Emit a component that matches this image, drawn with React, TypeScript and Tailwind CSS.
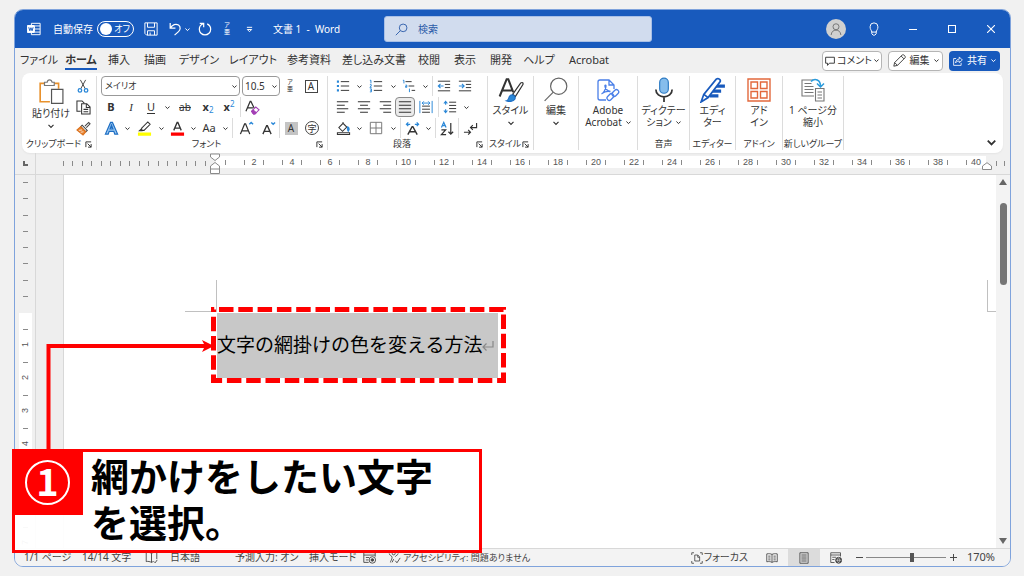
import type { ReactNode } from "react";
import clsx from "clsx";

const tabs = [
  { label: "ファイル", width: "w-11" },
  { label: "ホーム", width: "w-10", active: true },
  { label: "挿入", width: "w-9" },
  { label: "描画", width: "w-9" },
  { label: "デザイン", width: "w-[52px]" },
  { label: "レイアウト", width: "w-14" },
  { label: "参考資料", width: "w-14" },
  { label: "差し込み文書", width: "w-[74px]" },
  { label: "校閲", width: "w-9" },
  { label: "表示", width: "w-9" },
  { label: "開発", width: "w-9" },
  { label: "ヘルプ", width: "w-10" },
  { label: "Acrobat", width: "w-[60px]" },
];

const rulerNumbers = Array.from({ length: 19 }, (_, i) => (i + 1) * 2);

function Icon({ size = "h-4 w-4", box = 16, children }: { size?: string; box?: number; children: ReactNode }) {
  return (
    <svg
      viewBox={`0 0 ${box} ${box}`}
      className={clsx("shrink-0", size)}
      fill="none"
      stroke="currentColor"
      strokeWidth="1.1"
      aria-hidden="true"
    >
      {children}
    </svg>
  );
}

function Chevron({ className = "h-[5px] w-[5px]" }: { className?: string }) {
  return (
    <svg viewBox="0 0 6 6" className={clsx("shrink-0", className)} fill="none" stroke="currentColor" strokeWidth="1.2" aria-hidden="true">
      <path d="M.5 1.800 3 4.300l2.500-2.500" />
    </svg>
  );
}

function Tool({ label, width = "w-5", active, children }: { label: string; width?: string; active?: boolean; children: ReactNode }) {
  return (
    <button
      type="button"
      aria-label={label}
      className={clsx(
        "flex h-5 shrink-0 items-center justify-center",
        width,
        active && "rounded border border-[#8a8a8a] bg-[#ebebeb]"
      )}
    >
      {children}
    </button>
  );
}

function More({ label }: { label: string }) {
  return (
    <button type="button" aria-label={label} className="flex h-5 w-3 shrink-0 items-center justify-center">
      <Chevron />
    </button>
  );
}

function Divider() {
  return <span className="mx-px h-5 w-px shrink-0 bg-[#dcdcdc]" />;
}

function Group({ label, width, launcher, children }: { label?: string; width: string; launcher?: boolean; children: ReactNode }) {
  return (
    <section aria-label={label} className={clsx("flex shrink-0 flex-col py-[3px]", width)}>
      <div className="flex flex-1 flex-col border-r border-[#dcdcdc]">
        <div className="flex-1">{children}</div>
        <div className="flex h-3 items-center text-[9px] leading-3 whitespace-nowrap">
          <span className="flex flex-1 justify-center">{label}</span>
          {launcher && (
            <button type="button" aria-label={`${label}の設定`} className="mr-1">
              <Icon size="h-[7px] w-[7px]" box={8}>
                <path d="M1 7V1h6M3 3l4 4M7 3.500V7H3.500" />
              </Icon>
            </button>
          )}
        </div>
      </div>
    </section>
  );
}

function BigButton({ icon, lines, more }: { icon: ReactNode; lines: string[]; more?: "inline" | "below" }) {
  return (
    <button type="button" className="flex w-full flex-col items-center text-[10px] leading-3 whitespace-nowrap">
      <span className="flex h-7 items-center">{icon}</span>
      {lines.map((line, i) => (
        <span key={line} className="flex items-center gap-1">
          {line}
          {more === "inline" && i === lines.length - 1 && <Chevron />}
        </span>
      ))}
      {more === "below" && <Chevron className="mt-1 h-[6px] w-[6px]" />}
    </button>
  );
}

function TitleBar() {
  return (
    <header className="flex h-[38px] shrink-0 items-center bg-[#185abd] text-white">
      <div className="flex w-[369px] shrink-0 items-center pl-3 text-[10px]">
        <Icon size="h-[14px] w-[14px]">
          <path d="M5 4V1.500h10v13H5V12M9 4.500h6M9 8h6M9 11.500h6" />
          <path d="M.5 4h8v8h-8z" fill="#fff" />
          <path d="m2 6 1.200 4L4.500 6.500 5.800 10 7 6" stroke="#185abd" />
        </Icon>
        <label htmlFor="autosave" className="ml-3">自動保存</label>
        <span className="relative ml-1 flex">
          <input
            id="autosave"
            type="checkbox"
            role="switch"
            className="h-4 w-[37px] appearance-none rounded-full border border-white before:mt-px before:ml-[2px] before:block before:h-3 before:w-3 before:rounded-full before:bg-white"
          />
          <span className="pointer-events-none absolute inset-y-0 right-1 flex items-center text-[9px]">オフ</span>
        </span>
        <button type="button" aria-label="上書き保存" className="ml-[10px]">
          <Icon size="h-[14px] w-[14px]">
            <path d="M1 1h14v14H3L1 13zM4 1v5h8V1M4 15v-5h8v5M7 12v3" />
          </Icon>
        </button>
        <button type="button" aria-label="元に戻す" className="ml-[10px]">
          <Icon size="h-[14px] w-[14px]">
            <path d="M2.500 1v6h6M2.500 7C5 3 9 1.500 12 3.500c3 2.300 2 5.500 0 7.500l-4.500 4" strokeWidth="1.400" />
          </Icon>
        </button>
        <button type="button" aria-label="元に戻す履歴" className="ml-[3px]">
          <Chevron />
        </button>
        <button type="button" aria-label="やり直し" className="ml-2">
          <Icon size="h-[14px] w-[14px]">
            <path d="M2 1.500h4.500V6M6.300 1.700C3 3 1.500 5.500 1.500 8.300a6.500 6.500 0 0 0 13 0c0-3-1.600-5-4-6.200" strokeWidth="1.400" />
          </Icon>
        </button>
        <button type="button" aria-label="ルビ" className="ml-3 flex flex-col items-center text-[6px] leading-[7px]">
          <span>ア</span>
          <span>亜</span>
        </button>
        <button type="button" aria-label="クイック アクセスのカスタマイズ" className="ml-4">
          <Icon size="h-[7px] w-[7px]" box={8}>
            <path d="M1 1.500h6M1.500 4 4 6.500 6.500 4z" />
          </Icon>
        </button>
        <h1 className="ml-5 text-[10px] whitespace-pre">文書 1  -  Word</h1>
      </div>
      <label className="flex h-[26px] w-[268px] shrink items-center gap-[10px] rounded-[3px] border border-[#a9c0e6] bg-[#d1dcee] px-[10px] text-[#2a5aa8]">
        <Icon size="h-[13px] w-[13px]">
          <circle cx="10" cy="6" r="4.700" />
          <path d="M6.500 9.500 1 15" />
        </Icon>
        <input
          type="search"
          aria-label="検索"
          placeholder="検索"
          className="min-w-0 flex-1 bg-transparent text-[10px] outline-none placeholder:text-[#2a5aa8]"
        />
      </label>
      <div className="ml-auto flex items-center">
        <button type="button" aria-label="アカウント" className="flex w-9 justify-center">
          <span className="flex h-5 w-5 items-center justify-center rounded-full bg-[#d0d0d0] text-[#666]">
            <Icon size="h-3 w-3">
              <circle cx="8" cy="5" r="4" />
              <path d="M1.500 16c.5-4.500 3-6.500 6.500-6.500s6 2 6.500 6.500" />
            </Icon>
          </span>
        </button>
        <button type="button" aria-label="ヒント" className="flex w-[39px] justify-center">
          <Icon size="h-[14px] w-[14px]">
            <path d="M5.500 11.500C5.300 9.500 3.500 8.500 3.500 5.500a4.500 4.500 0 0 1 9 0c0 3-1.800 4-2 6zM5.500 11v2.500L7 15h2l1.500-1.500V11" />
          </Icon>
        </button>
        <button type="button" aria-label="最小化" className="flex w-[39px] justify-center">
          <Icon size="h-2 w-2" box={8}><path d="M0 4.500h8" /></Icon>
        </button>
        <button type="button" aria-label="最大化" className="flex w-[39px] justify-center">
          <Icon size="h-2 w-2" box={8}><path d="M.5.5h7v7h-7z" /></Icon>
        </button>
        <button type="button" aria-label="閉じる" className="flex w-[39px] justify-center">
          <Icon size="h-2 w-2" box={8}><path d="m0 0 8 8M8 0 0 8" /></Icon>
        </button>
      </div>
    </header>
  );
}

function TabBar() {
  return (
    <div className="flex h-[25px] shrink-0 items-center pr-[10px] pl-[2px] text-[11px]">
      <nav className="flex">
        {tabs.map(tab => (
          <button key={tab.label} type="button" className={clsx("flex shrink-0 justify-center whitespace-nowrap", tab.width)}>
            <span className={clsx("border-b-2 leading-[17px]", tab.active ? "border-[#185abd] font-bold" : "border-transparent")}>
              {tab.label}
            </span>
          </button>
        ))}
      </nav>
      <div className="ml-auto flex gap-[6px] text-[10px] whitespace-nowrap">
        <button type="button" className="flex h-5 w-[60px] items-center justify-center gap-[2px] rounded border border-[#b5b5b5] bg-white">
          <Icon size="h-[10px] w-[10px]"><path d="M1 2h14v9.500H7L4 15v-3.500H1z" strokeWidth="1.500" /></Icon>
          コメント
          <Chevron />
        </button>
        <button type="button" className="flex h-5 w-[55px] items-center justify-center gap-1 rounded border border-[#b5b5b5] bg-white">
          <Icon size="h-[13px] w-[13px]"><path d="m1 15 1-4.500L11.500 1c2-.5 4 1.500 3.500 3.500L5.500 14zM10 2.500 13.500 6M2 10.500 5.500 14" /></Icon>
          編集
          <Chevron />
        </button>
        <button type="button" className="flex h-5 w-[51px] items-center justify-center gap-1 rounded bg-[#185abd] text-white">
          <Icon size="h-[10px] w-[10px]"><path d="M5 4H1v11h12v-4M4 11c.5-4 3-6 6-6V1.500l5 5-5 4V8c-3 0-4.500 1-6 3z" strokeWidth="1.300" /></Icon>
          共有
          <Chevron />
        </button>
      </div>
    </div>
  );
}

function ClipboardGroup() {
  return (
    <Group label="クリップボード" width="w-[75px]" launcher>
      <div className="flex">
        <button type="button" className="flex flex-1 flex-col items-center pl-[10px] text-[10px] leading-3 whitespace-nowrap">
          <Icon size="mt-[3px] mb-[2px] h-[26px] w-[26px]" box={24}>
            <path d="M11 21H2V4h4M15 4h4v5" stroke="#e8912d" strokeWidth="1.500" />
            <path d="M6 6V3h2.500c.3-3 4-3 4.500 0H15v3z" fill="#fff" stroke="#777" />
            <path d="M12.500 9.500H23v13H12.500z" fill="#fff" stroke="#555" />
          </Icon>
          貼り付け
          <Chevron className="mt-1 h-[6px] w-[6px]" />
        </button>
        <div className="flex w-[33px] flex-col items-center gap-px">
          <Tool label="切り取り">
            <Icon size="h-[14px] w-[14px]">
              <path d="m5 1 5.500 10M11 1 5.500 11" stroke="#444" />
              <circle cx="4.500" cy="13" r="2" stroke="#2b88d8" strokeWidth="1.500" />
              <circle cx="11.500" cy="13" r="2" stroke="#2b88d8" strokeWidth="1.500" />
            </Icon>
          </Tool>
          <Tool label="コピー">
            <Icon size="h-[15px] w-[15px]">
              <path d="M5 12H1V1h5.500L9 3.500" />
              <path d="M6 4h5.500L15 7.500V15H6zM11 4v4h4M8 10h5M8 12.500h5" fill="#fff" />
            </Icon>
          </Tool>
          <Tool label="書式のコピー">
            <Icon size="h-[15px] w-[15px]">
              <path d="M9.500 5.500 13.500 1.500l1.500 1.500-4 4M6.500 4.500l5.500 5.500-1.500 1.500L5 6z" fill="#fff" stroke="#444" />
              <path d="m5 6 5.500 5.500L7.500 15 1 9.500z" fill="#e8812d" stroke="#d9701c" />
              <path d="m3 10 3.500-.5M5 12l3-.5" stroke="#fff" strokeWidth=".8" />
            </Icon>
          </Tool>
        </div>
      </div>
    </Group>
  );
}

function FontGroup() {
  return (
    <Group label="フォント" width="w-[231px]" launcher>
      <div className="flex flex-col gap-px pl-1">
        <div className="flex items-center">
          <span className="relative flex items-center">
            <select aria-label="フォント" className="h-5 w-[139px] appearance-none rounded border border-[#999] bg-white pl-[3px] text-[9px] leading-3">
              <option>メイリオ</option>
            </select>
            <Chevron className="pointer-events-none absolute right-[3px] h-[5px] w-[5px]" />
          </span>
          <span className="relative ml-[2px] flex items-center">
            <select aria-label="フォント サイズ" className="h-5 w-[38px] appearance-none rounded border border-[#999] bg-white pl-[2px] text-[10px] leading-3">
              <option>10.5</option>
            </select>
            <Chevron className="pointer-events-none absolute right-[3px] h-[5px] w-[5px]" />
          </span>
          <Tool label="ルビ">
            <span className="flex flex-col items-center text-[6px] leading-[7px]">
              <span>ア</span>
              <span>亜</span>
            </span>
          </Tool>
          <Tool label="囲み線" width="w-[22px]">
            <span className="flex h-[13px] w-[13px] items-center justify-center border border-[#444] text-[10px]">A</span>
          </Tool>
        </div>
        <div className="flex items-center text-[11px]">
          <Tool label="太字"><b>B</b></Tool>
          <Tool label="斜体"><i className="font-['Liberation_Serif',serif]">I</i></Tool>
          <Tool label="下線"><span className="underline underline-offset-2">U</span></Tool>
          <More label="下線の種類" />
          <Tool label="取り消し線" width="w-6"><span className="text-[10px] line-through">ab</span></Tool>
          <Tool label="下付き" width="w-[22px]"><span><b>x</b><sub className="text-[8px] text-[#2b88d8]">2</sub></span></Tool>
          <Tool label="上付き"><span><b>x</b><sup className="text-[8px] text-[#2b88d8]">2</sup></span></Tool>
          <Divider />
          <Tool label="書式のクリア">
            <Icon size="h-[15px] w-[15px]">
              <path d="M1 12 5.500 1.500h.8L10 9M2.500 8.500h6" strokeWidth="1.300" />
              <path d="m7 12 4.500-4.500 3.500 3L10.500 15H9z" fill="#fff" stroke="#a33fb5" />
              <path d="m7 12 1.500-1.500 3.500 3-1.500 1.500H9z" fill="#a33fb5" stroke="#a33fb5" />
            </Icon>
          </Tool>
        </div>
        <div className="flex items-center">
          <Tool label="文字の効果">
            <Icon size="h-[15px] w-[15px]">
              <path d="M1.500 14 7 1.500h2L14.500 14h-3l-1-3h-5l-1 3zM6.500 8.500h3L8 4.500z" fill="#9cc8f0" stroke="#1f6fc4" strokeWidth="1.300" />
            </Icon>
          </Tool>
          <More label="文字の効果の種類" />
          <Tool label="蛍光ペン" width="w-[22px]">
            <Icon size="h-[15px] w-[15px]">
              <path d="M5 7.500 11.500 1l2.500 2.500L7.500 10H5zM5 8l-2.500 2.500H6" />
              <path d="M1 14h14" stroke="#ffff00" strokeWidth="3.500" />
            </Icon>
          </Tool>
          <More label="蛍光ペンの色" />
          <Tool label="フォントの色">
            <Icon size="h-[15px] w-[15px]">
              <path d="M4 10 7.600 1.500h.8L12 10M5 7.500h6" strokeWidth="1.400" />
              <path d="M1 14h14" stroke="#ff0000" strokeWidth="3.500" />
            </Icon>
          </Tool>
          <More label="フォントの色の選択" />
          <Tool label="文字種の変換"><span className="text-[11px]">Aa</span></Tool>
          <More label="文字種の選択" />
          <Divider />
          <Tool label="フォント サイズの拡大" width="w-6">
            <Icon size="h-[15px] w-[15px]">
              <path d="M1.500 14 6 3h1l4.500 11M3 10.500h7" strokeWidth="1.400" />
              <path d="m11 3.500 2-2 2 2" stroke="#2b88d8" strokeWidth="1.500" />
            </Icon>
          </Tool>
          <Tool label="フォント サイズの縮小">
            <Icon size="h-[15px] w-[15px]">
              <path d="m2 14 4-9h.8l4 9M3.300 11h6" strokeWidth="1.400" />
              <path d="m11 1.500 2 2 2-2" stroke="#2b88d8" strokeWidth="1.500" />
            </Icon>
          </Tool>
          <Divider />
          <Tool label="文字の網かけ">
            <span className="flex h-[13px] w-[13px] items-center justify-center bg-[#c4c4c4] text-[10px]">A</span>
          </Tool>
          <Tool label="囲い文字" width="w-[22px]">
            <span className="flex h-[14px] w-[14px] items-center justify-center rounded-full border border-[#444] text-[9px] leading-none">字</span>
          </Tool>
        </div>
      </div>
    </Group>
  );
}

function Lines({ d }: { d: string }) {
  return (
    <Icon size="h-[14px] w-[14px]">
      <path d={d} strokeWidth="1.200" />
    </Icon>
  );
}

function ParagraphGroup() {
  return (
    <Group label="段落" width="w-[160px]" launcher>
      <div className="flex flex-col gap-px pl-[5px]">
        <div className="flex items-center">
          <Tool label="箇条書き">
            <Icon size="h-[14px] w-[14px]">
              <path d="M5.500 3H15M5.500 8H15M5.500 13H15" />
              <path d="M1 1.800h2.400v2.400H1zM1 6.800h2.400v2.400H1zM1 11.800h2.400v2.400H1z" fill="#2b88d8" stroke="none" />
            </Icon>
          </Tool>
          <More label="行頭文字" />
          <Tool label="段落番号" width="w-[22px]">
            <Icon size="h-[14px] w-[14px]">
              <path d="M5.500 3H15M5.500 8H15M5.500 13H15" />
              <path d="M1 1.500h1.200v3.500M1 6.500h1.600v1.300L1 9.500h2M1 11.300h1.800v3.400H1M1.500 13h1.300" stroke="#2b88d8" />
            </Icon>
          </Tool>
          <More label="番号書式" />
          <Tool label="アウトライン">
            <Icon size="h-[14px] w-[14px]">
              <path d="M4 3h7M7.500 8H14M11 13h4" />
              <path d="M1 1.500h1.200v3.500M4 7h1.500v2.500H4V8.300h1.500M8.500 11v4" stroke="#2b88d8" />
            </Icon>
          </Tool>
          <More label="リスト ライブラリ" />
          <Divider />
          <Tool label="インデントを減らす">
            <Icon size="h-[14px] w-[14px]">
              <path d="M1 2.500h14M9 6.200h6M9 9.800h6M1 13.500h14" />
              <path d="M7.500 8H1.500M4 5.500 1.500 8 4 10.500" stroke="#2b88d8" strokeWidth="1.300" />
            </Icon>
          </Tool>
          <Tool label="インデントを増やす" width="w-[22px]">
            <Icon size="h-[14px] w-[14px]">
              <path d="M1 2.500h14M9 6.200h6M9 9.800h6M1 13.500h14" />
              <path d="M1 8h6M4.500 5.500 7 8l-2.500 2.500" stroke="#2b88d8" strokeWidth="1.300" />
            </Icon>
          </Tool>
        </div>
        <div className="flex items-center">
          <Tool label="左揃え"><Lines d="M1 2h13M1 6h9M1 10h13M1 14h9" /></Tool>
          <Tool label="中央揃え" width="w-[22px]"><Lines d="M1 2h14M3.500 6h9M1 10h14M3.500 14h9" /></Tool>
          <Tool label="右揃え"><Lines d="M2 2h13M6 6h9M2 10h13M6 14h9" /></Tool>
          <Tool label="両端揃え" active><Lines d="M1 2h14M1 6h14M1 10h14M1 14h14" /></Tool>
          <Tool label="均等割り付け" width="w-[22px]">
            <Icon size="h-[14px] w-[14px]">
              <path d="M3.500 7h9M3.500 10.500h9M3.500 14h9" />
              <path d="M1 1v14M15 1v14M3.500 3.500h9M5.500 1.500l-2 2 2 2M10.500 1.500l2 2-2 2" stroke="#2b88d8" />
            </Icon>
          </Tool>
          <Divider />
          <Tool label="行と段落の間隔">
            <Icon size="h-[14px] w-[14px]">
              <path d="M7 2.500h8M7 6.200h8M7 9.800h8M7 13.500h8" />
              <path d="M3 1.500v4M3 10.500v4M1 4l2-2.500L5 4M1 12l2 2.500L5 12" stroke="#2b88d8" strokeWidth="1.300" />
            </Icon>
          </Tool>
          <More label="間隔の選択" />
        </div>
        <div className="flex items-center">
          <Tool label="塗りつぶし">
            <Icon size="h-[15px] w-[15px]">
              <path d="M3 7 7.500 2.500l4 4L7 11zM7.500 2.500V1" />
              <path d="M12.500 6c2.500 1.500 1.500 4 .5 5-1-1.500-1.500-3-.5-5z" fill="#2b88d8" stroke="#2b88d8" />
              <path d="M1.500 12.500h13v2h-13z" />
            </Icon>
          </Tool>
          <More label="塗りつぶしの色" />
          <Tool label="罫線" width="w-[22px]">
            <Icon size="h-[14px] w-[14px]"><path d="M1.500 1.500h13v13h-13zM8 1.500v13M1.500 8h13" stroke="#777" /></Icon>
          </Tool>
          <More label="罫線の種類" />
          <Divider />
          <Tool label="拡張書式">
            <Icon size="h-[15px] w-[15px]">
              <path d="M3 14.500 7.600 6h.8l4.600 8.500M5 11.500h6" strokeWidth="1.500" />
              <path d="M1.500 3.500h4M3.500 1.500l-2 2 2 2M14.500 3.500h-4M12.500 1.500l2 2-2 2" stroke="#2b88d8" strokeWidth="1.300" />
            </Icon>
          </Tool>
          <More label="拡張書式の選択" />
          <Divider />
          <Tool label="並べ替え">
            <Icon size="h-[15px] w-[15px]">
              <path d="M1.500 7 4 1.500 6.500 7M2.500 5h3" stroke="#2b88d8" strokeWidth="1.300" />
              <path d="M1.500 9.500h4.500l-4.500 5H6.500M11.500 2v12M9 11.500l2.500 2.500 2.500-2.500" strokeWidth="1.300" />
            </Icon>
          </Tool>
          <Divider />
          <Tool label="編集記号の表示">
            <Icon size="h-[15px] w-[15px]">
              <path d="M14.500 2v5H8M10.500 4.500 8 7l2.500 2.500M1 12h7M5.500 9.500 8 12l-2.500 2.500" strokeWidth="1.200" />
            </Icon>
          </Tool>
        </div>
      </div>
    </Group>
  );
}

function Ribbon() {
  return (
    <div className="mx-[7px] flex h-[80px] shrink-0 items-stretch rounded-lg bg-white shadow-xs">
      <ClipboardGroup />
      <FontGroup />
      <ParagraphGroup />
      <Group label="スタイル" width="w-[46px]" launcher>
        <BigButton
          lines={["スタイル"]}
          more="below"
          icon={
            <Icon size="h-[26px] w-[26px]" box={24}>
              <path d="M1.500 18 8 2h1.500L14 14M4 12.500h8.500" strokeWidth="1.900" />
              <path d="m13.500 16 7.500-10.500c1.500-1 2.500 0 2 1.500L16 18z" fill="#fff" />
              <path d="M8 22c2-.5 1.500-2 2.500-4 1-1.800 4-2 5 0s-.5 4-3 4.300C11 22.600 9.500 22.500 8 22z" fill="#2b88d8" stroke="#1f6fc4" />
            </Icon>
          }
        />
      </Group>
      <Group width="w-[45px]">
        <BigButton
          lines={["編集"]}
          more="below"
          icon={
            <Icon size="h-[26px] w-[26px]" box={24}>
              <circle cx="14.500" cy="8.500" r="7.500" stroke="#666" />
              <path d="m9.500 14-8 8" stroke="#666" />
            </Icon>
          }
        />
      </Group>
      <Group width="w-[59px]">
        <BigButton
          lines={["Adobe", "Acrobat"]}
          more="inline"
          icon={
            <Icon size="h-6 w-6" box={24}>
              <g stroke="#4a7fe8" strokeWidth="1.300">
                <path d="M10 22H4c-1.500 0-2-.5-2-2V4c0-1.500.5-2 2-2h9l5 5v4M13 2v5h5" />
                <path d="M5.500 16c2-1 4.500-5 4.500-8 0-1.500-1.500-1-1 .5.500 2.500 3 4.500 5.500 5M6 15.500c2-1.500 5-2.500 8-2" />
                <rect x="10.500" y="17" width="7.500" height="4.500" rx="2.200" transform="rotate(-45 14 19)" />
                <rect x="15.500" y="13" width="7.500" height="4.500" rx="2.200" transform="rotate(-45 19 15)" />
              </g>
            </Icon>
          }
        />
      </Group>
      <Group label="音声" width="w-[52px]">
        <BigButton
          lines={["ディクテー", "ション"]}
          more="inline"
          icon={
            <Icon size="h-[26px] w-[26px]" box={24}>
              <rect x="8" y="1" width="8" height="14" rx="4" fill="#86bdec" stroke="#2f7cc4" />
              <path d="M4.500 11.500c0 9 15 9 15 0M12 18.500V23" strokeWidth="1.600" />
            </Icon>
          }
        />
      </Group>
      <Group label="エディター" width="w-[46px]">
        <BigButton
          lines={["エディ", "ター"]}
          icon={
            <Icon size="h-[26px] w-[26px]" box={24}>
              <path d="M12 8.500h11M10 13h9.500M9 17.500h8" stroke="#185abd" strokeWidth="3" />
              <path d="M1 23 3.500 16 15 2c2-1.500 4.500.5 3.500 2.500L7.500 19z" fill="#fff" stroke="#185abd" strokeWidth="1.600" />
              <path d="m3.500 16 4 3" stroke="#185abd" strokeWidth="1.600" />
            </Icon>
          }
        />
      </Group>
      <Group label="アドイン" width="w-[47px]">
        <BigButton
          lines={["アド", "イン"]}
          icon={
            <Icon size="h-6 w-6" box={24}>
              <path d="M1 1h22v22H1zM4 4h6.500v6.500H4zM13.500 4H20v6.500h-6.500zM4 13.500h6.500V20H4zM13.500 13.500H20V20h-6.500z" stroke="#e2683c" strokeWidth="1.400" />
            </Icon>
          }
        />
      </Group>
      <Group label="新しいグループ" width="w-[61px]">
        <BigButton
          lines={["1 ページ分", "縮小"]}
          icon={
            <Icon size="h-6 w-6" box={24}>
              <path d="M13 18H1V2h11M3.500 5.500h7M3.500 8.500h9M3.500 11.500h9M3.500 14.500h9" stroke="#777" />
              <path d="M14.500 10.500h8.500v12.500h-8.500zM16.500 14h4.500M16.500 17h4.500M16.500 20h4.500" fill="#fff" stroke="#777" />
              <path d="M10 3.500C14-.5 19.500 2 19.500 8M16 5.500 19.500 9 23 5.500" stroke="#2b9bdc" strokeWidth="1.500" />
            </Icon>
          }
        />
      </Group>
      <button type="button" aria-label="リボンを折りたたむ" className="mt-auto mr-[7px] mb-[6px] ml-auto">
        <Chevron className="h-[9px] w-[9px]" />
      </button>
    </div>
  );
}

function Tick() {
  return <span className="h-[5px] w-px shrink-0 bg-[#8a8a8a]" />;
}

function HorizontalRuler() {
  return (
    <div className="flex h-[22px] shrink-0 border-b border-[#d8d8d8] font-['Liberation_Sans',sans-serif] text-[9px] leading-3 text-[#555]">
      <div className="flex w-[21px] shrink-0 items-center justify-center border-r border-[#d8d8d8]">
        <span className="h-[5px] w-[5px] border-b-2 border-l-2 border-[#666]" />
      </div>
      <div className="flex h-[21px] w-[180px] shrink-0 items-center justify-between pr-[10px] pl-[27px]">
        {Array.from({ length: 16 }, (_, i) => <Tick key={i} />)}
      </div>
      <div className="relative mt-[3px] flex h-3 min-w-0 flex-1 bg-white">
        <div className="flex min-w-0 flex-1 overflow-hidden">
          <span className="flex w-[19px] shrink-0 items-center justify-center"><Tick /></span>
          {rulerNumbers.map(n => (
            <span key={n} className="flex w-[38px] shrink-0 items-center justify-between px-[9px]">
              <Tick />
              <span className="flex w-0 justify-center">{n}</span>
              <Tick />
            </span>
          ))}
          <span className="flex w-[28px] shrink-0 items-center justify-between px-[9px]">
            <Tick />
            <span className="flex w-0 justify-center">40</span>
          </span>
        </div>
        <svg viewBox="0 0 10 22" className="absolute -top-[3px] -left-[6px] h-[22px] w-[10px]" fill="#fff" stroke="#8a8a8a" aria-hidden="true">
          <path d="M.5 1h9v3L5 7.500.5 4zM.5 20.500V13L5 9.500 9.500 13v7.500zM.5 16h9" />
        </svg>
        <svg viewBox="0 0 10 8" className="absolute top-[6px] -right-[6px] h-2 w-[10px]" fill="#fff" stroke="#8a8a8a" aria-hidden="true">
          <path d="M.5 7.500V4L5 .7 9.500 4v3.500z" />
        </svg>
      </div>
      <div className="flex h-[21px] w-6 shrink-0 items-center justify-between pr-[5px] pl-[10px]">
        <Tick />
        <Tick />
      </div>
    </div>
  );
}

function VerticalRuler() {
  return (
    <div className="flex w-[21px] shrink-0 flex-col items-center overflow-hidden border-r border-[#d8d8d8] font-['Liberation_Sans',sans-serif] text-[9px] leading-none text-[#555]">
      <div className="flex h-[138px] shrink-0 flex-col items-center justify-between pt-[7px] pb-4">
        {Array.from({ length: 8 }, (_, i) => (
          <span key={i} className="h-px w-[5px] bg-[#8a8a8a]" />
        ))}
      </div>
      <div className="flex min-h-0 w-[13px] flex-1 flex-col items-center overflow-hidden bg-white">
        {[1, 2, 3, 4, 5, 6, 7].map(n => (
          <div key={n} className="flex h-[33px] shrink-0 flex-col items-center">
            <span className="mt-4 h-px w-[5px] shrink-0 bg-[#8a8a8a]" />
            <span className="mt-3 flex h-2 items-center [writing-mode:sideways-lr]">{n}</span>
          </div>
        ))}
      </div>
    </div>
  );
}

function DocumentArea() {
  return (
    <main className="flex min-h-0 flex-1">
      <VerticalRuler />
      <div className="w-[27px] shrink-0 bg-[#eeeeee]" />
      <div className="relative min-w-0 flex-1 overflow-hidden border-l border-[#d8d8d8] bg-white pt-[138px] pl-[153px]">
        <span className="absolute top-[105px] left-[152px] h-8 w-px bg-[#c0c0c0]" />
        <span className="absolute top-[136px] left-[121px] h-px w-8 bg-[#c0c0c0]" />
        <span className="absolute top-[105px] right-0 h-8 w-[9px] border-b border-l border-[#c0c0c0]" />
        <p className="inline-flex items-center bg-[#c8c8c8] pr-1 text-[19px] leading-[65px] whitespace-nowrap text-black [font-feature-settings:normal]">
          <span>文字の網掛けの色を変える方法</span>
          <svg viewBox="0 0 12 12" className="h-3 w-3 shrink-0" fill="none" stroke="#888" strokeWidth="1.200" aria-hidden="true">
            <path d="M11 1v6H1M4.500 3.500 1 7l3.500 3.500" />
          </svg>
        </p>
      </div>
      <div className="flex w-[14px] shrink-0 flex-col items-center bg-[#f3f3f3] py-1">
        <svg viewBox="0 0 8 6" className="h-[6px] w-2" aria-hidden="true"><path d="M4 0 8 6H0z" fill="#666" /></svg>
        <span className="mt-[18px] h-[82px] w-[7px] rounded-full bg-[#757575]" />
        <svg viewBox="0 0 8 6" className="mt-auto h-[6px] w-2" aria-hidden="true"><path d="M0 0h8L4 6z" fill="#666" /></svg>
      </div>
    </main>
  );
}

function StatusBar() {
  return (
    <footer className="flex h-[18px] shrink-0 items-center border-t border-[#d8d8d8] bg-[#f3f3f3] text-[10px] whitespace-nowrap text-[#444]">
      <div className="flex items-center pl-[9px]">
        <span className="w-[58px]">1/1 ページ</span>
        <span className="w-[63px]">14/14 文字</span>
        <Icon size="mr-3 h-[13px] w-[13px]">
          <path d="M8 3v11M8 3C6 1.500 4 1.500 1.500 2v11c2.500-.5 4.500 0 6.500 1 1-.5 1.500-.8 2.500-1M8 3c2-1.500 4-1.500 6.500-1v8M11 13l1.500 1.500L15 11" />
        </Icon>
        <span className="w-[65px]">日本語</span>
        <span className="w-[74px]">予測入力: オン</span>
        <span className="w-[54px]">挿入モード</span>
        <Icon size="mr-3 h-[13px] w-[13px]">
          <path d="M15 7V2H1v12h6M1 5h14M3.500 8h4M3.500 11h3" />
          <circle cx="11.500" cy="11" r="4" />
          <circle cx="11.500" cy="11" r="1.600" fill="currentColor" />
        </Icon>
        <Icon size="mr-[2px] h-[13px] w-[13px]">
          <circle cx="7" cy="3" r="1.800" />
          <path d="M1.500 3c0 3 3.500 2 3.500 5 0 3-2 4-2 6M12.500 3c0 2-3 2.500-3.500 4M5 14l2-4M9 12l2 2.500 4-6" />
        </Icon>
        <span className="text-[9px]">アクセシビリティ: 問題ありません</span>
      </div>
      <div className="ml-auto flex items-center self-stretch pr-[15px]">
        <button type="button" className="flex items-center gap-px pr-2">
          <Icon size="h-3 w-3">
            <path d="M4 1H1v3M1 12v3h3M12 1h3v3M15 12v3h-3M5 4h4l2.500 2.500V12H5zM9 4v3h2.500" />
          </Icon>
          フォーカス
        </button>
        <button type="button" aria-label="閲覧モード" className="flex w-8 justify-center">
          <Icon size="h-3 w-3">
            <path d="M8 3v11M1 2.500c3-.5 5-.3 7 .7 2-1 4-1.200 7-.7V13c-3-.5-5-.3-7 .8-2-1.100-4-1.300-7-.8zM3 5.500h3M3 8h3M3 10.500h3M10 5.500h3M10 8h3M10 10.500h3" />
          </Icon>
        </button>
        <button type="button" aria-label="印刷レイアウト" className="flex w-8 items-center justify-center self-stretch bg-[#dcdcdc]">
          <Icon size="h-3 w-3">
            <path d="M2.500 1h11v14h-11zM4.500 4h7M4.500 6.700h7M4.500 9.300h7M4.500 12h7" />
          </Icon>
        </button>
        <button type="button" aria-label="Web レイアウト" className="flex w-8 justify-center">
          <Icon size="h-3 w-3">
            <path d="M6 14H1V1h13v5M1 4h13M3 7h5M3 10h3" />
            <circle cx="11.500" cy="11" r="4" fill="#444" />
            <path d="M8 11h7M11.500 7.500c-2 2-2 5 0 7 2-2 2-5 0-7z" stroke="#f3f3f3" strokeWidth=".7" />
          </Icon>
        </button>
        <button type="button" aria-label="縮小" className="ml-[2px] flex w-3 justify-center">
          <Icon size="h-[7px] w-[7px]" box={8}><path d="M0 4h8" /></Icon>
        </button>
        <input
          type="range"
          aria-label="ズーム"
          min={0}
          max={100}
          defaultValue={58}
          className="h-3 w-20 appearance-none bg-transparent bg-[linear-gradient(#888,#888)] bg-[length:100%_1px] bg-center bg-no-repeat [&::-webkit-slider-thumb]:h-[9px] [&::-webkit-slider-thumb]:w-1 [&::-webkit-slider-thumb]:appearance-none [&::-webkit-slider-thumb]:bg-[#555]"
        />
        <button type="button" aria-label="拡大" className="flex w-[15px] justify-center">
          <Icon size="h-[7px] w-[7px]" box={8}><path d="M0 4h8M4 0v8" /></Icon>
        </button>
        <span className="ml-[6px] text-[11px]">170%</span>
      </div>
    </footer>
  );
}

function Annotations() {
  return (
    <>
      <svg viewBox="0 0 512 460" className="pointer-events-none absolute top-0 left-0 h-[460px] w-[512px]" fill="none" stroke="#ff0000" aria-hidden="true">
        <path d="M213.500 309.500h290v71h-290z" strokeWidth="5" strokeDasharray="14.500 4.800" strokeDashoffset="13.800" />
        <path d="M48.500 452V346H206" strokeWidth="4" />
        <path d="m202 340 12 6-12 6 3-6z" fill="#ff0000" stroke="none" />
      </svg>
      <aside className="absolute bottom-[23px] left-3 flex w-[470px] items-start border-[3px] border-[#ff0000] bg-white/95 text-black">
        <span className="-mt-[3px] -ml-[3px] flex h-[66px] w-[71px] shrink-0 items-center justify-center bg-[#ff0000]">
          <span className="flex h-[45px] w-[45px] items-center justify-center rounded-full border-2 border-white pb-1 font-['Noto_Sans_CJK_JP',sans-serif] text-[38px] leading-none font-bold text-white">
            1
          </span>
        </span>
        <p className="pb-[6px] pl-2 font-['Noto_Sans_CJK_JP',sans-serif] text-[38px] leading-[46px] font-bold">
          網かけをしたい文字
          <br />
          を選択。
        </p>
      </aside>
    </>
  );
}

export default function App() {
  return (
    <div className="relative h-screen bg-[#f1f1f1] pt-[9px] pr-[13px] pb-[9px] pl-[14px] font-['Noto_Sans','Noto_Sans_CJK_JP',sans-serif] text-[#333]">
      <div className="flex h-full flex-col overflow-hidden rounded-[9px] border border-[#7fa3dc] bg-[#f0f0f0] [font-feature-settings:'palt']">
        <TitleBar />
        <TabBar />
        <Ribbon />
        <HorizontalRuler />
        <DocumentArea />
        <StatusBar />
      </div>
      <Annotations />
    </div>
  );
}
